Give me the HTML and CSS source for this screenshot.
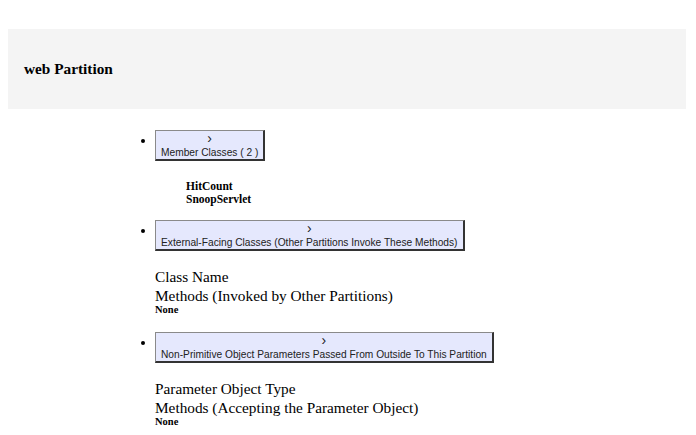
FILE: index.html
```html
<!DOCTYPE html>
<html>
<head>
<meta charset="utf-8">
<link rel="stylesheet" href="styles.css">
</head>
<body>
<div class="header"><span class="title">web Partition</span></div>
<ul class="sections">
  <li class="section">
    <button class="toggle"><span class="chev">›</span><br>Member Classes ( 2 )</button>
    <div class="members">
      <div class="member">HitCount</div>
      <div class="member">SnoopServlet</div>
    </div>
  </li>
  <li class="section">
    <button class="toggle"><span class="chev">›</span><br>External-Facing Classes (Other Partitions Invoke These Methods)</button>
    <div class="detail">
      <div class="label">Class Name</div>
      <div class="label">Methods (Invoked by Other Partitions)</div>
      <div class="none">None</div>
    </div>
  </li>
  <li class="section">
    <button class="toggle"><span class="chev">›</span><br>Non-Primitive Object Parameters Passed From Outside To This Partition</button>
    <div class="detail">
      <div class="label">Parameter Object Type</div>
      <div class="label">Methods (Accepting the Parameter Object)</div>
      <div class="none">None</div>
    </div>
  </li>
</ul>
</body>
</html>
```
FILE: styles.css
```css
html, body { background: #ffffff; }
body {
  margin: 8px;
  font-family: "Liberation Serif", serif;
  color: #000;
}
.header {
  margin-top: 21px;
  height: 80px;
  background: #f4f4f4;
  display: flex;
  align-items: center;
  padding-left: 16px;
  width: 662px;
}
.title {
  font-weight: bold;
  font-size: 15.3px;
}
.sections {
  margin: 21px 0 0 0;
  padding-left: 147px;
  font-size: 12px;
  line-height: 21px;
}
.section { margin: 0; }
.toggle {
  font-family: "Liberation Sans", Arial, sans-serif;
  font-size: 10.2px;
  line-height: 13px;
  padding: 1px 5px 0 5px;
  background: #e5e8fd;
  border-style: solid;
  border-width: 1px 2px 2px 1px;
  border-color: #8a8a8a #333 #333 #8a8a8a;
  color: #222;
  margin: 0;
  text-align: center;
  vertical-align: top;
}
.chev {
  font-size: 14px;
  line-height: 13px;
}
.members {
  padding: 19px 0 14px 31px;
  font-weight: bold;
  font-size: 11.5px;
  line-height: 13px;
}
.detail {
  padding: 16px 0 16px 0;
}
.label {
  font-size: 15.3px;
  line-height: 19px;
}
.none {
  font-weight: bold;
  font-size: 10.5px;
  line-height: 12px;
  margin-top: -1px;
}
```
